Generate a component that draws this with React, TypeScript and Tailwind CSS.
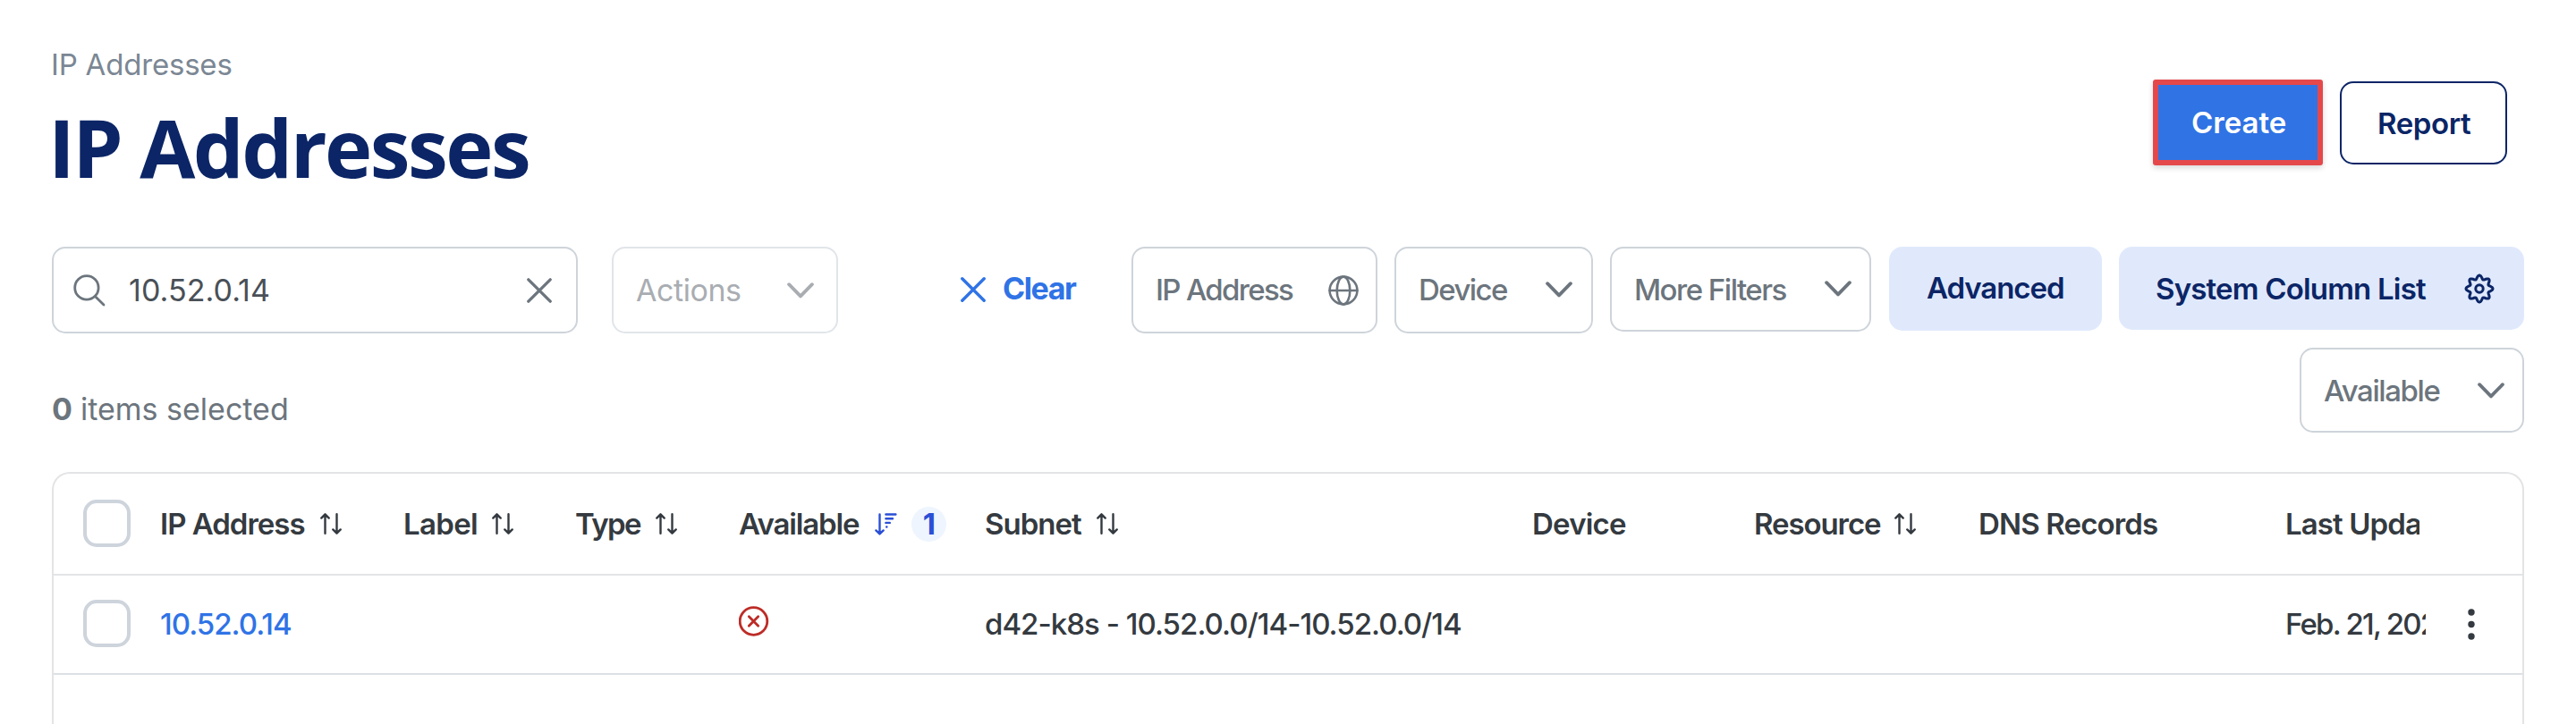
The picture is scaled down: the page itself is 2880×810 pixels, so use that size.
import type { ReactNode } from "react";

const gearPath =
  Array.from({ length: 97 }, (_, i) => {
    const a = (i / 96) * Math.PI * 2;
    const r = 12.9 + 2.1 * Math.cos(8 * a);
    return `${i ? "L" : "M"}${(17 + r * Math.sin(a)).toFixed(2)} ${(17 - r * Math.cos(a)).toFixed(2)}`;
  }).join("") + "Z";

function Stroke({ w, h, sw = 3, className = "", children }: { w: number; h: number; sw?: number; className?: string; children: ReactNode }) {
  return (
    <svg
      width={w}
      height={h}
      viewBox={`0 0 ${w} ${h}`}
      fill="none"
      stroke="currentColor"
      strokeWidth={sw}
      strokeLinecap="round"
      strokeLinejoin="round"
      className={`shrink-0 ${className}`}
    >
      {children}
    </svg>
  );
}

const Chevron = ({ className = "" }: { className?: string }) => (
  <Stroke w={30} h={18} sw={3.8} className={className}>
    <path d="M2.1 2.2L15 15.4L27.9 2.2" />
  </Stroke>
);

const Cross = ({ sw = 3.3 }: { sw?: number }) => (
  <Stroke w={28} h={28} sw={sw}>
    <path d="M1.8 1.8L26.2 26.2M26.2 1.8L1.8 26.2" />
  </Stroke>
);

const SortIcon = () => (
  <Stroke w={24} h={24} sw={2.4} className="-ml-px">
    <path d="M5.5 22.7V1.4M1.3 5.6L5.5 1.3L9.7 5.6M18.5 1.2V22.6M14.3 18.4L18.5 22.7L22.7 18.4" />
  </Stroke>
);

const SortDescIcon = () => (
  <Stroke w={25} h={25} sw={2.4} className="text-[#2a4fd6]">
    <path d="M5.5 1.5V23M1.4 19.4L5.5 23.4L9.6 19.4M12.4 1.5H23.4M12.4 6.3H20M12.4 10.9H16.8M13.2 15.5H13.4" />
  </Stroke>
);

const Checkbox = () => <div className="mb-[2px] size-[53px] rounded-[15px] border-4 border-[#ced4dc]" />;

const columns = "grid grid-cols-[119px_272px_192px_183px_275px_612px_248px_251px_343px_1fr] items-center";

function Head({ label, gap, ls, sort = true }: { label: string; gap: string; ls: string; sort?: boolean }) {
  return (
    <div className={`flex items-center ${gap}`}>
      <span className={ls}>{label}</span>
      {sort && <SortIcon />}
    </div>
  );
}

export default function App() {
  return (
    <div className="flex h-[810px] w-[2880px] flex-col overflow-hidden whitespace-nowrap bg-white px-[58px] font-['Inter',sans-serif] text-[33px] leading-[40px]">
      <header className="flex h-[276px] shrink-0 items-start justify-between pr-[19px]">
        <div className="pt-[52px]">
          <div className="-ml-px tracking-[-0.2px] text-[#7b8794]">IP Addresses</div>
          <h1 className="ml-[-4px] mt-[22px] font-['Open_Sans',sans-serif] text-[90px] font-bold leading-[100px] tracking-[-2.5px] text-[#0b2566]">
            IP Addresses
          </h1>
        </div>
        <div className="flex items-start gap-[19px] pt-[89px] font-semibold">
          <button className="h-[96px] w-[190px] rounded-[3px] border-6 border-[#e5484b] bg-[#3073e4] pl-[37px] text-left tracking-[0px] text-white shadow-[0_3px_6px_rgba(0,0,0,0.15)]">
            Create
          </button>
          <button className="mt-[2px] h-[93px] w-[187px] rounded-[15px] border-[2.5px] border-[#0b2566] pl-[40px] text-left tracking-[-0.4px] text-[#0b2566]">
            Report
          </button>
        </div>
      </header>

      <div className="flex h-[113px] shrink-0 items-start font-medium text-[#6c757d]">
        <div className="flex h-[97px] w-[588px] items-center rounded-[15px] border-2 border-[#ced4da] pl-[22px] pr-[27px]">
          <Stroke w={36} h={36} sw={2.8}>
            <circle cx="14.9" cy="14.9" r="13.2" />
            <path d="M24.6 24.8L34 34" />
          </Stroke>
          <span className="ml-[26px] flex-1 text-[34px] font-normal tracking-[0.07px] text-[#495057]">10.52.0.14</span>
          <Cross />
        </div>
        <div className="ml-[38px] flex h-[97px] w-[253px] items-center justify-between rounded-[15px] border-2 border-[#e1e5e9] pl-[25px] pr-[25px] text-[34px] font-normal text-[#a9adb2]">
          <span className="tracking-[-0.45px]">Actions</span>
          <Chevron />
        </div>
        <div className="ml-[137px] flex h-[95px] w-[191px] items-center gap-[19px] text-[34px] font-bold text-[#2f73e6]">
          <Cross sw={3.4} />
          <span className="mb-[2px] tracking-[-1.42px]">Clear</span>
        </div>
        <div className="flex h-[97px] w-[275px] items-center justify-between rounded-[15px] border-2 border-[#ced4da] pl-[25px] pr-[19px]">
          <span className="mb-[2px] tracking-[-1.69px]">IP Address</span>
          <Stroke w={34} h={34} sw={2.6}>
            <circle cx="17" cy="17" r="15.4" />
            <ellipse cx="17" cy="17" rx="7.3" ry="15.4" />
            <path d="M1.6 17H32.4" />
          </Stroke>
        </div>
        <div className="ml-[19px] flex h-[97px] w-[222px] items-center justify-between rounded-[15px] border-2 border-[#ced4da] pl-[25px] pr-[21px]">
          <span className="mb-[2px] tracking-[-1.58px]">Device</span>
          <Chevron className="mb-[2px]" />
        </div>
        <div className="ml-[19px] flex h-[95px] w-[292px] items-center justify-between rounded-[15px] border-2 border-[#ced4da] pl-[25px] pr-[20px]">
          <span className="tracking-[-1.5px]">More Filters</span>
          <Chevron className="mb-[2px]" />
        </div>
        <div className="ml-[20px] h-[94px] w-[238px] rounded-[15px] bg-[#e0e9fc] pl-[42px] font-semibold leading-[93px] tracking-[-1.05px] text-[#0b2566]">
          Advanced
        </div>
        <div className="ml-[19px] flex h-[93px] w-[453px] items-center justify-between rounded-[15px] bg-[#e0e9fc] pl-[41px] pr-[33px] font-semibold text-[#0b2566]">
          <span className="tracking-[-0.81px]">System Column List</span>
          <Stroke w={34} h={34} sw={3}>
            <path d={gearPath} />
            <circle cx="17" cy="17" r="4.2" />
          </Stroke>
        </div>
      </div>

      <div className="flex h-[139px] shrink-0 items-start justify-between text-[#6c757d]">
        <div className="mt-[49px] text-[34px]">
          <span className="font-bold">0</span>
          <span className="ml-[9px]">items selected</span>
        </div>
        <div className="flex h-[95px] w-[251px] items-center justify-between rounded-[15px] border-2 border-[#ced4da] pl-[25px] pr-[20px] font-medium">
          <span className="tracking-[-1.4px]">Available</span>
          <Chevron />
        </div>
      </div>

      <div className="h-[320px] shrink-0 rounded-t-[20px] border-2 border-b-0 border-[#e3e4e6] text-[#343a40]">
        <div className={`${columns} h-[114px] border-b-2 border-[#e3e4e6] font-semibold`}>
          <div className="pl-[33px]">
            <Checkbox />
          </div>
          <Head label="IP Address" gap="gap-[18px]" ls="tracking-[-1px]" />
          <Head label="Label" gap="gap-[17px]" ls="tracking-[-0.68px]" />
          <Head label="Type" gap="gap-[18px]" ls="tracking-[-1.58px]" />
          <div className="flex items-center">
            <span className="tracking-[-1.16px]">Available</span>
            <span className="ml-[18px]">
              <SortDescIcon />
            </span>
            <span className="ml-[16px] flex size-[39px] items-center justify-center rounded-full bg-[#eef5fe] font-bold text-[#2a4fd6]">1</span>
          </div>
          <Head label="Subnet" gap="gap-[18px]" ls="tracking-[-0.99px]" />
          <Head label="Device" gap="" ls="tracking-[-0.79px]" sort={false} />
          <Head label="Resource" gap="gap-[17px]" ls="tracking-[-1.09px]" />
          <Head label="DNS Records" gap="" ls="tracking-[-0.86px]" sort={false} />
          <div className="w-[150px] overflow-hidden tracking-[-0.9px]">Last Updated</div>
        </div>
        <div className={`${columns} h-[111px] border-b-2 border-[#dde0e4] font-medium`}>
          <div className="pl-[33px]">
            <Checkbox />
          </div>
          <div className="mb-[2px] tracking-[-0.98px] text-[#2f73e6]">10.52.0.14</div>
          <div />
          <div />
          <div className="mb-[7px] text-[#bd2c27]">
            <Stroke w={34} h={34} sw={2.8}>
              <circle cx="16.5" cy="17" r="15.3" />
              <path d="M11.3 11.8L21.7 22.2M21.7 11.8L11.3 22.2" />
            </Stroke>
          </div>
          <div className="mb-[2px] tracking-[-0.97px]">d42-k8s - 10.52.0.0/14-10.52.0.0/14</div>
          <div />
          <div />
          <div />
          <div className="flex items-center">
            <div className="mb-[2px] w-[157px] overflow-hidden tracking-[-1.8px]">Feb. 21, 2024</div>
            <svg width="8" height="36" viewBox="0 0 8 36" fill="currentColor" className="ml-[47px] shrink-0">
              <circle cx="4" cy="4" r="3.7" />
              <circle cx="4" cy="17.5" r="3.7" />
              <circle cx="4" cy="31" r="3.7" />
            </svg>
          </div>
        </div>
      </div>
    </div>
  );
}
